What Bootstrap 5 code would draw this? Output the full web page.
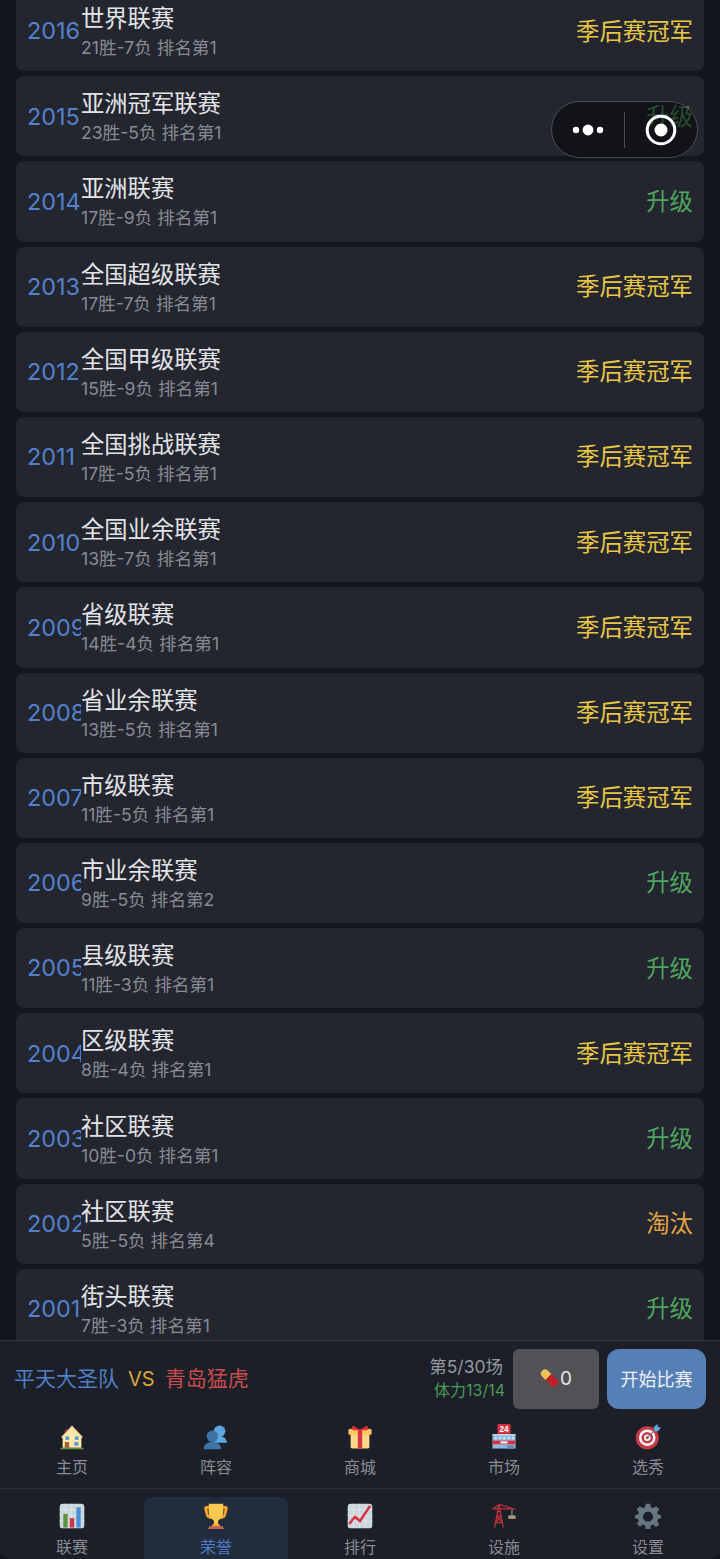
<!DOCTYPE html>
<html lang="zh-CN">
<head>
  <meta charset="UTF-8" />
  <meta name="viewport" content="width=device-width, initial-scale=1.0"/>
  <title>荣誉</title>
  <link href="https://cdn.jsdelivr.net/npm/bootstrap@5.3.0/dist/css/bootstrap.min.css" rel="stylesheet">
  <style>
    html, body { height: 100%; }
    body { background: #13161c; font-family: Inter, "Noto Sans CJK SC", sans-serif; overflow: hidden; }
    .app-shell { height: 1559px; width: 720px; }
    .list-area { height: 1340px; overflow: hidden; padding: 0 16px; }
    .list-stack { margin-top: -9px; gap: 5px; }
    .season-row { height: 80.2px; flex: none; background: #23262f; border-radius: 8px; padding: 0 11px; }
    .season-year { width: 54px; flex: none; overflow: hidden; white-space: nowrap; color: #5381cc; font-size: 23.4px; line-height: 1; }
    .season-text { padding-top: 2px; }
    .season-name { color: #e3e4e8; font-size: 23.3px; line-height: 30px; }
    .season-rec { color: #878a93; font-size: 17.6px; line-height: 24px; margin-top: 2px; }
    .season-res { font-size: 23.4px; }
    .res-champ { color: #e9c646; }
    .res-up { color: #4fa55e; }
    .res-out { color: #e2a344; }
    .capsule { position: absolute; left: 551px; top: 101px; width: 147px; height: 57px; border-radius: 29px; border: 1.5px solid #4b4d55; background: rgba(3, 4, 7, .55); }
    .capsule-sep { width: 1px; height: 36px; background: #4b4d55; }
    .capsule-half { width: 73px; }
    .dock { height: 219px; background: #1c1f28; border-top: 1px solid #343741; border-radius: 0 0 10px 10px; }
    .match-bar { height: 74px; padding: 8px 14px 0 14px; }
    .team-text { font-size: 21px; white-space: nowrap; height: 60px; }
    .team-home { color: #4f7fc6; }
    .team-vs { color: #dba63f; font-size: 20px; margin: 0 10px 0 9px; }
    .team-away { color: #c94c4c; }
    .match-info { text-align: right; margin-right: 8px; padding-top: 5px; }
    .match-round { color: #94979f; font-size: 17.5px; line-height: 25px; padding-right: 2px; }
    .match-power { color: #4a9a58; font-size: 16px; line-height: 23px; }
    .pill-btn { width: 86px; height: 60px; background: #515156; border-radius: 6px; color: #e8e8ea; font-size: 19px; margin-right: 8px; }
    .pill-btn svg { flex: none; margin-top: -2px; }
    .start-btn { width: 99px; height: 60px; background: #5580b5; border-radius: 12px; color: #eef1f5; font-size: 18px; }
    .tab-row { height: 73px; }
    .tab-row-low { height: 71px; border-top: 1px solid #2e313a; padding-top: 8px; }
    .tab-cell { width: 144px; color: #898c94; font-size: 16px; line-height: 22px; border-radius: 8px 8px 0 0; padding-top: 9px; }
    .tab-row-low .tab-cell { padding-top: 6px; }
    .tab-cell svg { width: 26px; height: 26px; display: block; margin-bottom: 6px; }
    .tab-row-low .tab-cell svg { margin-bottom: 7px; }
    .tab-on { background: #212c3e; color: #4f7cc4; }
  </style>
</head>
<body>
  <div class="app-shell d-flex flex-column position-relative">

    <!-- season list -->
    <div class="list-area">
      <div class="list-stack d-flex flex-column" id="seasonList"></div>
    </div>

    <!-- mini program capsule -->
    <div class="capsule d-flex align-items-center">
      <div class="capsule-half d-flex justify-content-center">
        <svg width="34" height="14" viewBox="0 0 34 14"><circle cx="5" cy="7" r="3.2" fill="#fff"/><circle cx="17" cy="7" r="5.400" fill="#fff"/><circle cx="29" cy="7" r="3.2" fill="#fff"/></svg>
      </div>
      <div class="capsule-sep"></div>
      <div class="capsule-half d-flex justify-content-center">
        <svg width="32" height="32" viewBox="0 0 32 32"><circle cx="16" cy="16" r="13.8" fill="none" stroke="#fff" stroke-width="3"/><circle cx="16" cy="16" r="6.5" fill="#fff"/></svg>
      </div>
    </div>

    <!-- bottom dock -->
    <div class="dock flex-shrink-0">
      <div class="match-bar d-flex align-items-start">
        <div class="team-text flex-grow-1 d-flex align-items-center">
          <span class="team-home">平天大圣队</span><span class="team-vs">VS</span><span class="team-away">青岛猛虎</span>
        </div>
        <div class="match-info">
          <div class="match-round">第5/30场</div>
          <div class="match-power">体力13/14</div>
        </div>
        <div class="pill-btn d-flex align-items-center justify-content-center">
          <svg width="20" height="20" viewBox="0 0 19 19"><path d="M2 2.5a4 4 0 0 1 5.6 0l3.2 3.2-5.6 5.6L2 8.100a4 4 0 0 1 0-5.600z" fill="#eec250"/><path d="M10.800 5.700l5.700 5.700a4 4 0 0 1-5.600 5.600L5.200 11.300z" fill="#bb2029"/></svg>
          <span>0</span>
        </div>
        <div class="start-btn d-flex align-items-center justify-content-center">开始比赛</div>
      </div>

      <div class="tab-row d-flex">
        <div class="tab-cell d-flex flex-column align-items-center">
          <svg viewBox="0 0 36 36"><path d="M5 33V17L18 4l13 13v16z" fill="#ffe8a8"/><path d="M18 2L3 18l2 2L18 6l13 14 2-2z" fill="#f3d9a0"/><path d="M6 12l5-6v3z" fill="#b8323a"/><rect x="8" y="25" width="6" height="8" fill="#a0603a"/><rect x="9" y="17" width="5" height="5" fill="#5b9bd5"/><rect x="22" y="17" width="5" height="5" fill="#5b9bd5"/><rect x="21" y="25" width="6" height="5" fill="#5b9bd5"/><rect x="2" y="33" width="32" height="2" fill="#5c913b"/></svg>
          <span>主页</span>
        </div>
        <div class="tab-cell d-flex flex-column align-items-center">
          <svg viewBox="0 0 36 36"><circle cx="23" cy="10" r="8" fill="#5da6e0"/><path d="M14 26c0-6 4-9 9-9s10 3 10 9z" fill="#5da6e0"/><circle cx="13" cy="17" r="8" fill="#3e73a8"/><path d="M1 35c0-7 5-10 12-10s12 3 12 10z" fill="#3e73a8"/></svg>
          <span>阵容</span>
        </div>
        <div class="tab-cell d-flex flex-column align-items-center">
          <svg viewBox="0 0 36 36"><rect x="5" y="10" width="26" height="24" rx="2" fill="#fdd888"/><rect x="2" y="7" width="32" height="8" rx="2" fill="#fcc860"/><rect x="15" y="7" width="6" height="27" fill="#d5333f"/><path d="M18 8L8 2 6 7l4 2zM18 8l10-6 2 5-4 2z" fill="#d5333f"/></svg>
          <span>商城</span>
        </div>
        <div class="tab-cell d-flex flex-column align-items-center">
          <svg viewBox="0 0 36 36"><rect x="9" y="0" width="18" height="14" rx="1" fill="#d5333f"/><text x="18" y="11.500" text-anchor="middle" font-family="Liberation Sans, sans-serif" font-weight="700" font-size="11.500" fill="#fff">24</text><rect x="2" y="14" width="32" height="20" fill="#8fb9de"/><rect x="2" y="14" width="32" height="2" fill="#ccd6dd"/><rect x="2" y="23" width="32" height="5" fill="#d5333f"/><rect x="13" y="24" width="10" height="3" fill="#f1f3f5"/><path d="M5 18h3v3H5zM11 18h3v3h-3zM17 18h3v3h-3zM23 18h3v3h-3zM29 18h3v3h-3z" fill="#d8e4ee"/><rect x="22" y="29" width="10" height="5" fill="#6b8fb0"/></svg>
          <span>市场</span>
        </div>
        <div class="tab-cell d-flex flex-column align-items-center">
          <svg viewBox="0 0 36 36"><circle cx="17" cy="19" r="16" fill="#c43a46"/><circle cx="17" cy="19" r="11.500" fill="#f5f8fa"/><circle cx="17" cy="19" r="8" fill="#c43a46"/><circle cx="17" cy="19" r="4.500" fill="#f5f8fa"/><circle cx="17" cy="19" r="2" fill="#c43a46"/><path d="M17 19L29 7" stroke="#66757f" stroke-width="1.500"/><path d="M26 4l5-4 1 4 4 1-4 5-5 0z" fill="#5da6e0"/></svg>
          <span>选秀</span>
        </div>
      </div>

      <div class="tab-row-low d-flex">
        <div class="tab-cell d-flex flex-column align-items-center">
          <svg viewBox="0 0 36 36"><rect x="1" y="1" width="34" height="34" rx="4" fill="#ccd6dd"/><path d="M1 9h34M1 17h34M1 25h34M9 1v34M17 1v34M25 1v34" stroke="#e1e8ed" stroke-width="1"/><rect x="6" y="15" width="6" height="19" fill="#5c913b"/><rect x="15" y="21" width="6" height="13" fill="#d5333f"/><rect x="24" y="6" width="6" height="28" fill="#4a90d6"/></svg>
          <span>联赛</span>
        </div>
        <div class="tab-cell tab-on d-flex flex-column align-items-center">
          <svg viewBox="0 0 36 36"><path d="M5 4h26c3 0 4 2 3 5l-2 8c-1 3-3 5-7 5H11c-4 0-6-2-7-5L2 9c-1-3 0-5 3-5z" fill="#f3a72f"/><path d="M6 8h3l2 10c-2 0-3-1-4-3zM30 8h-3l-2 10c2 0 3-1 4-3z" fill="#4a3a28"/><path d="M8 1h20v12c0 6-5 10-7 11v5h-6v-5c-2-1-7-5-7-11z" fill="#fcc94f"/><path d="M14 29h8l2 3H12z" fill="#f3a72f"/><path d="M9 32h18l2 4H7z" fill="#c1694f"/></svg>
          <span>荣誉</span>
        </div>
        <div class="tab-cell d-flex flex-column align-items-center">
          <svg viewBox="0 0 36 36"><rect x="1" y="1" width="34" height="34" rx="4" fill="#ccd6dd"/><path d="M1 9h34M1 17h34M1 25h34M9 1v34M17 1v34M25 1v34" stroke="#e1e8ed" stroke-width="1"/><path d="M3 29l8-10 7 6L32 4" fill="none" stroke="#d5333f" stroke-width="3.500" stroke-linejoin="round"/></svg>
          <span>排行</span>
        </div>
        <div class="tab-cell d-flex flex-column align-items-center">
          <svg viewBox="0 0 36 36"><g fill="none" stroke="#b8323a" stroke-width="1.800"><path d="M11 2L5 34M11 2l6 32M7.500 18h7M6 27h10M7.500 18l8.500 9M14.500 18L6 27M8 12h6"/><path d="M2 8h32M11 2l20 6M11 2L3 8"/></g><path d="M29 9v8" stroke="#8899a6" stroke-width="1.500"/><rect x="24" y="17" width="10" height="5" fill="#a89a76"/></svg>
          <span>设施</span>
        </div>
        <div class="tab-cell d-flex flex-column align-items-center">
          <svg viewBox="0 0 36 36"><path fill="#66757f" fill-rule="evenodd" d="M15 1h6l1 5 3 1.300 4.300-2.800 4.200 4.200L30.700 13l1.300 3 4 1v4l-4 1-1.300 3 2.800 4.300-4.200 4.200L25 29.700 22 31l-1 5h-6l-1-5-3-1.300-4.300 2.800-4.200-4.200L5.300 25 4 22l-4-1v-4l4-1 1.300-3-2.800-4.300 4.200-4.200L11 7.300 14 6zM18 12a7 7 0 1 0 0 14 7 7 0 0 0 0-14z"/></svg>
          <span>设置</span>
        </div>
      </div>
    </div>
  </div>

  <script>
    const seasons = [
      [2016, '世界联赛', '21胜-7负', 1, 'c'], [2015, '亚洲冠军联赛', '23胜-5负', 1, 'u'],
      [2014, '亚洲联赛', '17胜-9负', 1, 'u'], [2013, '全国超级联赛', '17胜-7负', 1, 'c'],
      [2012, '全国甲级联赛', '15胜-9负', 1, 'c'], [2011, '全国挑战联赛', '17胜-5负', 1, 'c'],
      [2010, '全国业余联赛', '13胜-7负', 1, 'c'], [2009, '省级联赛', '14胜-4负', 1, 'c'],
      [2008, '省业余联赛', '13胜-5负', 1, 'c'], [2007, '市级联赛', '11胜-5负', 1, 'c'],
      [2006, '市业余联赛', '9胜-5负', 2, 'u'], [2005, '县级联赛', '11胜-3负', 1, 'u'],
      [2004, '区级联赛', '8胜-4负', 1, 'c'], [2003, '社区联赛', '10胜-0负', 1, 'u'],
      [2002, '社区联赛', '5胜-5负', 4, 'o'], [2001, '街头联赛', '7胜-3负', 1, 'u']
    ];
    const results = {
      c: ['季后赛冠军', 'res-champ'],
      u: ['升级', 'res-up'],
      o: ['淘汰', 'res-out']
    };
    document.getElementById('seasonList').innerHTML = seasons.map(s => `
      <div class="season-row d-flex align-items-center">
        <div class="season-year">${s[0]}</div>
        <div class="season-text flex-grow-1">
          <div class="season-name">${s[1]}</div>
          <div class="season-rec">${s[2]} 排名第${s[3]}</div>
        </div>
        <div class="season-res ${results[s[4]][1]}">${results[s[4]][0]}</div>
      </div>`).join('');
  </script>
  <script src="https://cdn.jsdelivr.net/npm/bootstrap@5.3.0/dist/js/bootstrap.bundle.min.js"></script>
</body>
</html>
